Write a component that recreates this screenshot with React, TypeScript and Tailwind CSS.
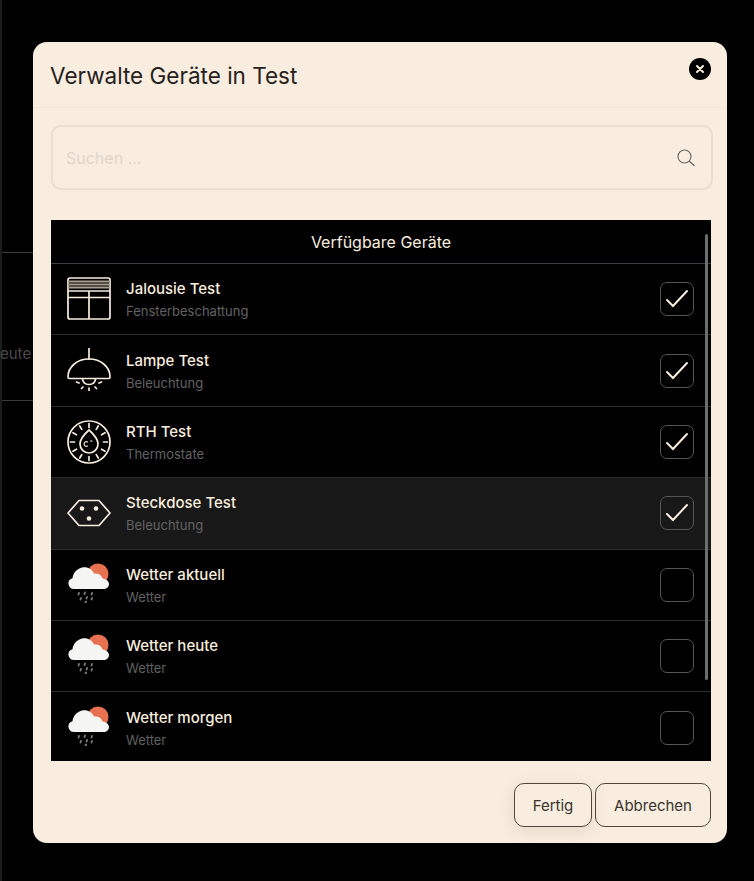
const font = { fontFamily: '"Inter", "Liberation Sans", sans-serif' };

function BlindIcon() {
  return (
    <svg width="44" height="43" viewBox="0 0 44 43" fill="none" stroke="#f8eddf" strokeWidth="1.7" className="-mt-[2px]">
      <rect x="1" y="1" width="42" height="41" rx="2" />
      <path d="M1 4.500h42M1 7.500h42M1 10.500h42" stroke="#a89f91" strokeWidth="1.800" />
      <path d="M1 14h42M1 20.500h42M22 14v28" />
    </svg>
  );
}

function LampIcon() {
  return (
    <svg width="44" height="43" viewBox="0 0 44 43" fill="none" stroke="#f8eddf" strokeWidth="1.700" strokeLinecap="round" className="-mt-[3px]">
      <path d="M22 0v11" />
      <path d="M1 29c0-10 9-18 21-18s21 8 21 18c0 1-.5 1.500-1.500 1.500h-39C1.500 30.500 1 30 1 29z" />
      <path d="M15.500 31c.5 3.500 3 5.500 6.500 5.500s6-2 6.500-5.500" />
      <path d="M12 35l-2.500-1M16 39l-1.500 1.500M22 40v2.500M28 39l1.500 1.500M32 35l2.500-1" />
    </svg>
  );
}

function ThermoIcon() {
  const ticks = Array.from({ length: 12 }, (_, i) => i * 30);
  return (
    <svg width="44" height="44" viewBox="0 0 44 44" fill="none" stroke="#f8eddf" strokeWidth="1.700" strokeLinecap="round">
      <circle cx="22" cy="22" r="21" />
      {ticks.map((a) => (
        <line key={a} x1="22" y1="3.500" x2="22" y2="7.500" transform={`rotate(${a} 22 22)`} />
      ))}
      <path d="M22 10c4.500 4 9 8.500 9 14a9 9 0 0 1-18 0c0-5.500 4.500-10 9-14z" />
      <path d="M20.500 22a2.300 2.300 0 1 0 0 4M23.500 21h1.500" strokeWidth="1.100" />
    </svg>
  );
}

function PlugIcon() {
  return (
    <svg width="44" height="28" viewBox="0 0 44 28" fill="none" stroke="#f8eddf" strokeWidth="1.700" strokeLinejoin="round">
      <path d="M1 14L12 1.500h20L43 14 32 26.500H12z" />
      <circle cx="15" cy="9.500" r="2.300" fill="#f8eddf" stroke="none" />
      <circle cx="29" cy="9.500" r="2.300" fill="#f8eddf" stroke="none" />
      <circle cx="22" cy="19.500" r="2.300" fill="#f8eddf" stroke="none" />
    </svg>
  );
}

function WeatherIcon() {
  return (
    <svg width="42" height="40" viewBox="0 0 42 40" className="-mt-[4px]">
      <circle cx="30" cy="11" r="10.500" fill="#e8714f" />
      <path
        d="M6 26a5.500 5.500 0 0 1-1.500-10.800C5 11 8 6 14 4.500c5.500-1 10 1.500 12 6 4.500-.5 7.500 1.500 8.500 5 4 .5 6.500 3 6.500 5.500s-2 5-5 5z"
        fill="#f5f5f3"
      />
      <g stroke="#787878" strokeWidth="1.900" strokeLinecap="round">
        <path d="M11 30l-.5 1.500M17 29.500l-.5 1.500M24 30l-.5 1.500" />
        <path d="M13 35l-.5 1.500M19 34l-.5 1.500M24 35l-.5 1.500" />
        <path d="M18 38.500l-.5 1" />
      </g>
    </svg>
  );
}

const devices = [
  { name: "Jalousie Test", type: "Fensterbeschattung", icon: <BlindIcon />, checked: true },
  { name: "Lampe Test", type: "Beleuchtung", icon: <LampIcon />, checked: true },
  { name: "RTH Test", type: "Thermostate", icon: <ThermoIcon />, checked: true },
  { name: "Steckdose Test", type: "Beleuchtung", icon: <PlugIcon />, checked: true, active: true },
  { name: "Wetter aktuell", type: "Wetter", icon: <WeatherIcon />, checked: false },
  { name: "Wetter heute", type: "Wetter", icon: <WeatherIcon />, checked: false },
  { name: "Wetter morgen", type: "Wetter", icon: <WeatherIcon />, checked: false },
];

export default function App() {
  return (
    <div className="relative w-[754px] h-[881px] bg-black overflow-hidden pt-[42px] pl-[33px]" style={font}>
      {/* page behind the modal */}
      <div className="absolute left-0 top-0 w-[2px] h-[881px] bg-[#1c1c1c]" />
      <div className="absolute left-[2px] top-[252px] w-[31px] h-px bg-[#3a3a3a]" />
      <div className="absolute left-[2px] top-[400px] w-[31px] h-px bg-[#3a3a3a]" />
      <div className="absolute left-0 top-[344px] text-[15px] leading-[20px] text-[#4a4a4a]">eute</div>

      <div className="relative w-[694px] h-[801px] rounded-[14px] bg-[#f8eddf] flex flex-col">
        <div className="h-[66px] shrink-0 border-b border-[#efe4d5] flex items-start justify-between pl-[17px] pr-[16px]">
          <div className="mt-[19px] text-[22.5px] leading-[30px] text-[#26211c]">Verwalte Geräte in Test</div>
          <div className="mt-[16px] w-[22px] h-[22px] rounded-full bg-black flex items-center justify-center">
            <svg width="10" height="10" viewBox="0 0 10 10" stroke="#f8eddf" strokeWidth="2" strokeLinecap="round">
              <path d="M2 2l6 6M8 2l-6 6" />
            </svg>
          </div>
        </div>

        <div className="mt-[17px] ml-[18px] w-[662px] h-[65px] shrink-0 rounded-[10px] border-2 border-[#ebdfd0] flex items-center justify-between pl-[13px] pr-[15px]">
          <span className="text-[16px] text-[#e0d6c9]">Suchen ...</span>
          <svg width="20" height="20" viewBox="0 0 20 20" fill="none" stroke="#6f6a62" strokeWidth="1.200" strokeLinecap="round">
            <circle cx="8.500" cy="8.500" r="6.500" />
            <path d="M13.300 13.300L18 17.500" />
          </svg>
        </div>

        <div className="relative mt-[30px] ml-[18px] w-[660px] h-[541px] shrink-0 bg-black overflow-hidden">
          <div className="h-[44px] border-b border-[#3d3d46] flex items-center justify-center text-[16px] text-[#f8eddf]">
            Verfügbare Geräte
          </div>
          {devices.map((d) => (
            <div
              key={d.name}
              className={`h-[71.4px] border-b border-[#2c2c2c] flex items-center pl-[16px] pr-[16px] ${d.active ? "bg-[#181818]" : ""}`}
            >
              <div className="w-[44px] flex items-center justify-center shrink-0">{d.icon}</div>
              <div className="ml-[15px] flex-1 flex flex-col gap-[2px] mt-[2px]">
                <div className="text-[15px] font-[450] leading-[20px] text-[#f8eddf]">{d.name}</div>
                <div className="text-[13px] leading-[20px] text-[#626262]">{d.type}</div>
              </div>
              <div className="w-[34px] h-[34px] mr-[1px] rounded-[7px] border border-[#555555] flex items-center justify-center">
                {d.checked && (
                  <svg width="24" height="20" viewBox="0 0 24 20" fill="none" stroke="#f8eddf" strokeWidth="2" strokeLinecap="round">
                    <path d="M2 11l6 6L22 2" />
                  </svg>
                )}
              </div>
            </div>
          ))}
          <div className="absolute left-[654px] top-[14px] w-[3px] h-[446px] rounded-full bg-[#6d6d6d]" />
        </div>

        <div className="mt-[22px] mr-[16px] flex justify-end gap-[3px]">
          <button className="w-[78px] h-[44px] pt-[3px] rounded-[10px] border border-[#4f473c] text-[15px] text-[#3a342d] shadow-[0_4px_16px_rgba(90,70,40,0.12)]">
            Fertig
          </button>
          <button className="w-[116px] h-[44px] pt-[3px] rounded-[10px] border border-[#4f473c] text-[15px] text-[#3a342d]">
            Abbrechen
          </button>
        </div>
      </div>
    </div>
  );
}
